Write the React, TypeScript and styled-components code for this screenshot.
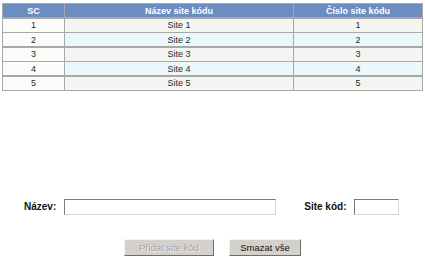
import React from "react";
import styled, { createGlobalStyle } from "styled-components";

const GlobalStyle = createGlobalStyle`
  html, body {
    margin: 0;
    padding: 0;
    background: #ffffff;
  }
  body {
    font-family: "Liberation Sans", Arial, sans-serif;
  }
`;

const rows = [1, 2, 3, 4, 5];

export default function App() {
  return (
    <Page>
      <GlobalStyle />
      <Grid>
        <HeadCell>SC</HeadCell>
        <HeadCell>Název site kódu</HeadCell>
        <HeadCell>Číslo site kódu</HeadCell>
        {rows.map((n) => (
          <React.Fragment key={n}>
            <Cell $first $even={n % 2 === 0}>{n}</Cell>
            <Cell $even={n % 2 === 0}>Site {n}</Cell>
            <Cell $even={n % 2 === 0}>{n}</Cell>
          </React.Fragment>
        ))}
      </Grid>

      <FormRow>
        <Label>Název:</Label>
        <TextInput $width={212} />
        <Label $spaced>Site kód:</Label>
        <TextInput $width={45} />
      </FormRow>

      <ButtonRow>
        <Button disabled $width={90}>Přidat site kód</Button>
        <Button $width={72}>Smazat vše</Button>
      </ButtonRow>
    </Page>
  );
}

const Page = styled.div`
  width: 425px;
  height: 258px;
  padding: 3px 2px 0 2px;
  box-sizing: border-box;
  display: flex;
  flex-direction: column;
`;

const Grid = styled.div`
  display: grid;
  grid-template-columns: 61px 228px 128px;
  grid-auto-rows: 13px;
  column-gap: 1px;
  row-gap: 1.5px;
  padding: 1px;
  background: #a8a8a8;
  width: 421px;
  box-sizing: border-box;
`;

const HeadCell = styled.div`
  background: #6c8dbf;
  color: #ffffff;
  font-weight: bold;
  font-size: 9px;
  display: flex;
  align-items: center;
  justify-content: center;
`;

const Cell = styled.div<{ $even?: boolean; $first?: boolean }>`
  background: ${(p) => (p.$first ? "#fcfcfa" : p.$even ? "#eaf8fc" : "#f4f4f0")};
  color: #2a2a2a;
  font-size: 9px;
  display: flex;
  align-items: center;
  justify-content: center;
`;

const FormRow = styled.div`
  display: flex;
  align-items: center;
  margin-top: 108px;
  padding-left: 22px;
  height: 16px;
`;

const Label = styled.span<{ $spaced?: boolean }>`
  font-weight: bold;
  font-size: 10px;
  color: #111111;
  margin-left: ${(p) => (p.$spaced ? "28px" : "0")};
  margin-right: 8px;
`;

const TextInput = styled.input<{ $width: number }>`
  width: ${(p) => p.$width}px;
  height: 16px;
  box-sizing: border-box;
  border: 1px solid;
  border-color: #7a7a7a #d8d8d8 #d8d8d8 #7a7a7a;
  background: #ffffff;
  padding: 0 2px;
  font-size: 10px;
  outline: none;
`;

const ButtonRow = styled.div`
  display: flex;
  justify-content: center;
  gap: 15px;
  margin-top: 24px;
`;

const Button = styled.button<{ $width: number }>`
  width: ${(p) => p.$width}px;
  height: 17px;
  box-sizing: border-box;
  padding: 0;
  background: #d4d1cc;
  border: 1px solid;
  border-color: #f4f4f4 #6e6e6e #6e6e6e #f4f4f4;
  font-family: "Liberation Sans", Arial, sans-serif;
  font-size: 9.5px;
  color: #111111;

  &:disabled {
    color: #a3a3a3;
    text-shadow: 1px 1px 0 #f0f0f0;
  }
`;
